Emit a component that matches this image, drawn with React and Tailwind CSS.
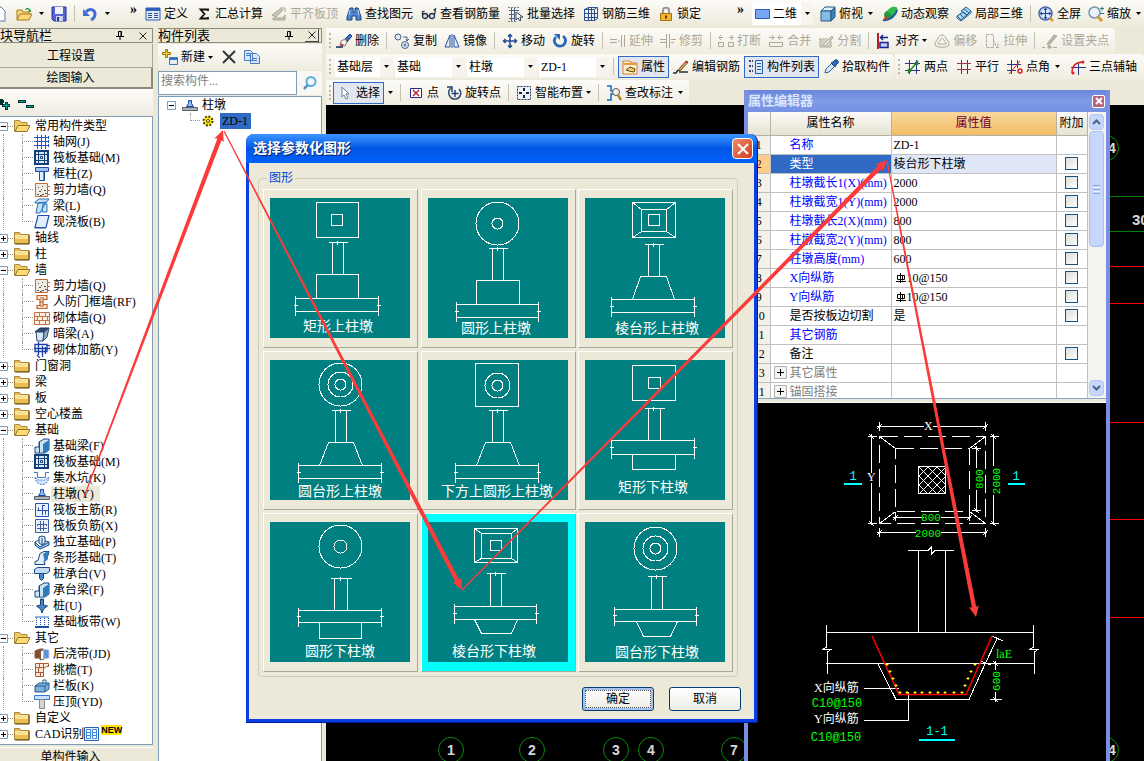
import clsx from 'clsx';

const ICONS = {
  newDoc: <path d="M2 1h9l4 4v10H2z" fill="#fff" stroke="#5b7ab0" />,
  open: (
    <>
      <path d="M9 4c1-3 4-3 5 0l1-1v3h-3l1-1c-1-2-2-2-3-1z" fill="#2a9a3a" />
      <path d="M1 14V4h5l1 2h6v3" fill="#f7d774" stroke="#a8791a" />
      <path d="M1 14l3-6h12l-3 6z" fill="#fdd97a" stroke="#a8791a" />
    </>
  ),
  save: (
    <>
      <path d="M1 1h14v14H3l-2-2z" fill="#5a62d8" stroke="#22309a" />
      <path d="M4 1h8v7H4z" fill="#eef1ff" />
      <path d="M5 10h7v5H5z" fill="#cfd4e8" />
      <path d="M6 11h2v4H6z" fill="#22309a" />
    </>
  ),
  undo: (
    <>
      <path d="M4 6c3-4 9-3 9 2 0 3-2 5-4 6" fill="none" stroke="#3f6fd6" strokeWidth="3" />
      <path d="M1 3v7h7z" fill="#3f6fd6" />
    </>
  ),
  define: (
    <>
      <path d="M1 2h14v12H1z" fill="#dfe9fb" stroke="#2d5fb8" />
      <path d="M1 2h14v3H1z" fill="#2d5fb8" />
      <path d="M3 7.500h4M3 9.500h4M3 11.500h4M9 7.500h4M9 9.500h4M9 11.500h4" stroke="#33507f" />
    </>
  ),
  sigma: <path d="M12 5V3.500H4.500l4 4.500-4 4.500H12V11" fill="none" stroke="#111" strokeWidth="1.800" />,
  slabTop: (
    <>
      <path d="M1 9l8-6 3 1-7 7zM2 12h10l2-3v5H2z" fill="#c9c6b8" stroke="#a8a595" />
      <path d="M9 2h5v4" fill="none" stroke="#a8a595" />
    </>
  ),
  find: (
    <>
      <path d="M4 2h3v4h2V2h3l3 9v3h-5v-4H6v4H1v-3z" fill="#4b86cf" stroke="#1c4687" />
      <path d="M4 4l-1 5M12 4l1 5" stroke="#bcd8f6" />
    </>
  ),
  glasses: (
    <g fill="#d9e4ef" stroke="#26323f" strokeWidth="1.300">
      <circle cx="4" cy="10" r="2.500" />
      <circle cx="11" cy="10" r="2.500" />
      <path d="M1.500 9V6l2-1M6.500 10h2M13.500 9l1-6-2 1" fill="none" />
    </g>
  ),
  batch: (
    <>
      <path d="M3.500 1v14M1 4.500h10M1 8.500h6M1 12.500h6M6.500 1v14" stroke="#4c6487" fill="none" />
      <path d="M0 1.500h12M0 15.500h8" stroke="#6d7f9b" strokeDasharray="2 1" />
      <path d="M8 6v8l2-2 2 3 1-1-1-3h3z" fill="#fff" stroke="#345" />
    </>
  ),
  rebar3d: (
    <path d="M1.500 3.500l4-2h9v11l-3 2h-10zM5.500 1v13M11.500 4v11M1 7.500h14M1 11.500h14M1 3.500h10l3-2M8.500 1v14" fill="none" stroke="#2c4f96" />
  ),
  lock: (
    <>
      <path d="M5 8V4c0-3 6-3 6 0v4" fill="none" stroke="#9a9a9a" strokeWidth="2" />
      <path d="M2.500 7.500h11v7h-11z" fill="#f2b632" stroke="#a8710d" />
      <path d="M8 9.500v3" stroke="#6b4300" strokeWidth="2" />
    </>
  ),
  rect2d: <path d="M.500 3.500h14v9H.500z" fill="#79a6f2" stroke="#2b59b5" />,
  cube: (
    <g stroke="#245a86" strokeLinejoin="round">
      <path d="M1 5l4-4h10l-4 4z" fill="#dff1fb" />
      <path d="M1 5h10v10H1z" fill="#86bce4" />
      <path d="M11 5l4-4v10l-4 4z" fill="#3f82b8" />
    </g>
  ),
  orbit: (
    <>
      <ellipse cx="7" cy="9" rx="5" ry="4.500" fill="#1f9a3d" />
      <path d="M5 6c1-4 6-6 9-5s1 7-2 9" fill="#2eb84e" />
      <path d="M1 14c5 1 12-3 14-10" fill="none" stroke="#1f57a8" strokeWidth="2" />
      <path d="M1 14l3-5 2 4z" fill="#c23b22" />
    </>
  ),
  local3d: (
    <g stroke="#1f6196" fill="#a9d4ef">
      <path d="M1 10l6-4 4 3-6 5zM5 5l5-4 5 4-4 4z" />
      <path d="M4 8l4 4M8 3l5 4M1 10v2l4 3 10-8V5" fill="none" />
    </g>
  ),
  fullscreen: (
    <>
      <circle cx="7.500" cy="7.500" r="6.500" fill="#d3e4fb" stroke="#4a6ba6" strokeWidth="1.500" />
      <path d="M7.500 2.500v10M2.500 7.500h10M6 4l1.500-2L9 4M6 11l1.500 2L9 11M4 6L2 7.500 4 9M11 6l2 1.500L11 9" stroke="#1f3f9a" fill="none" />
      <path d="M12 12l3 3" stroke="#d89a2b" strokeWidth="2.500" />
    </>
  ),
  zoom: (
    <>
      <circle cx="6.500" cy="6.500" r="5.500" fill="#eaf3fb" stroke="#7d93a8" strokeWidth="1.500" />
      <path d="M10 11l4 4" stroke="#d89a2b" strokeWidth="3" />
      <path d="M12 2.500h4M14 .500v4M12 7.500h4" stroke="#2b7f87" />
    </>
  ),
  erase: (
    <>
      <path d="M9 6l5-5 2 2-5 6z" fill="#3d71bd" stroke="#1f3f7a" />
      <path d="M5 8l4-2 2 3-2 4-5-1z" fill="#f3f0ec" stroke="#8c7a73" />
      <path d="M5 10l3 2-2 2-2-1z" fill="#cf3a54" />
      <path d="M0 14h7" stroke="#49587a" strokeWidth="2" />
    </>
  ),
  copyObj: (
    <g fill="#dbe9f8" stroke="#4a6480">
      <circle cx="4" cy="4" r="3" />
      <circle cx="11" cy="12" r="3.500" />
      <path d="M9 4h4v4M12 6l1 2 2-2" fill="none" />
      <circle cx="11" cy="12" r="1" />
    </g>
  ),
  mirror: (
    <>
      <path d="M6 2v12H1zM10 2v12h5z" fill="#e5eefb" stroke="#2555a5" />
      <path d="M8 1v14" stroke="#2555a5" />
    </>
  ),
  move: (
    <path d="M8 1.500v13M1.500 8h13M6 3.500l2-2 2 2M6 12.500l2 2 2-2M3.500 6l-2 2 2 2M12.500 6l2 2-2 2" fill="none" stroke="#1f4c93" strokeWidth="1.500" />
  ),
  rotate: (
    <>
      <path d="M4 4c-4 4 0 10 5 9 5-1 6-7 2-10" fill="none" stroke="#2c66ba" strokeWidth="2.800" />
      <path d="M2 1h6v6z" fill="#2c66ba" />
    </>
  ),
  extend: <path d="M0 6.500h7M0 9.500h7M8 8h2M11.500 2v12M14.500 2v12" fill="none" stroke="#aca899" />,
  trim: <path d="M0 6.500h6M0 9.500h6M6.500 1v14M9.500 1v14M11 6.500h5M11 9.500h3" fill="none" stroke="#aca899" />,
  breakIt: <path d="M1 4.500h4M11 4.500h4M3 2L1 4.500 3 7M13 2l2 2.500L13 7M.500 9.500h5v4h-5zM10.500 9.500h5v4h-5z" fill="none" stroke="#aca899" />,
  merge: <path d="M1 4.500h5M10 4.500h5M4 2l2 2.500L4 7M12 2l-2 2.500L12 7M1.500 9.500h13v4h-13z" fill="none" stroke="#aca899" />,
  split: <path d="M1 6h9M2 6v8h11V8M5 12l9-9 1 2-8 8z" fill="#d3d0c3" stroke="#aca899" />,
  align: (
    <>
      <path d="M2 0v16" stroke="#b3202c" strokeWidth="2" />
      <path d="M4.500 4.500H12M7 2L4.500 4.500 7 7" fill="none" stroke="#14248a" strokeWidth="1.500" />
      <path d="M4 9.500h8v5H4z" fill="#c3cff2" stroke="#14248a" strokeWidth="1.500" />
    </>
  ),
  offset: (
    <g fill="none" stroke="#aca899">
      <path d="M1 12c0-4 2-4 3-7 2-4 6-4 8 0 1 3 3 3 3 7-2 3-12 3-14 0z" />
      <path d="M4 11c0-3 2-2 2-4 1-2 3-2 4 0 0 2 2 1 2 4z" />
    </g>
  ),
  stretch: (
    <path d="M2.500 1.500h7v13h-7zM9 6l4 8.500h1v-4M12 14.500h3" fill="none" stroke="#aca899" strokeDasharray="3 1" />
  ),
  grip: <path d="M0 14.500h3M11 14.500h4M5 11l7-9 3 1-8 9zM6 13h3v2H6z" fill="#b9b6a7" stroke="#aca899" />,
  props: (
    <>
      <path d="M1 2h7l1 2h6v11H1z" fill="#fdeed0" stroke="#d5832a" />
      <path d="M1 4h14v2H1z" fill="#e79b42" />
      <path d="M4 11l4-3 5 2-1 3-5-1z" fill="#f3cb67" stroke="#5c4a1a" />
    </>
  ),
  editRebar: (
    <>
      <path d="M6 10l7-8 2 1-7 8-3 1z" fill="#d8ae6b" stroke="#6f4a1a" />
      <path d="M0 14h3l2-3M6 13h9" fill="none" stroke="#27303b" strokeWidth="1.500" />
      <path d="M12 3l2-1 1 1-1 2z" fill="#c23b3b" />
    </>
  ),
  list: (
    <>
      <path d="M7.500 1.500h7v13h-7z" fill="#d7e6fa" stroke="#2a5aa0" />
      <path d="M9 4.500h4M9 7.500h4M9 10.500h4" stroke="#2a5aa0" />
      <path d="M1 2h2M1 7h2M1 12h2M4 2h1M4 7h1M4 12h1" stroke="#3a4b62" strokeWidth="2" />
    </>
  ),
  picker: (
    <>
      <path d="M2 14l1-4 6-6 3 3-6 6z" fill="#d7eafa" stroke="#2a5f9e" />
      <path d="M8 4l2-1 2-2c2-1 4 1 3 3l-2 2-1 2z" fill="#2a6cc0" stroke="#173f7a" />
    </>
  ),
  twoPt: (
    <>
      <path d="M0 4.500h15M0 11.500h15M4.500 1v14M11.500 1v14" stroke="#273a8c" />
      <path d="M3 14L13 2" stroke="#2b8a2b" strokeWidth="1.500" />
      <circle cx="4.500" cy="11.500" r="2" fill="#2b7a2b" />
      <circle cx="11.500" cy="4.500" r="2" fill="#2b7a2b" />
    </>
  ),
  parallel: (
    <>
      <path d="M5.500 1v14M11.500 1v14" stroke="#273a8c" />
      <path d="M1 4.500h14M1 10.500h14" stroke="#9a3a4c" />
    </>
  ),
  ptAngle: (
    <>
      <path d="M0 5.500h14M0 11.500h9M4.500 1v14M10.500 1v8" stroke="#273a8c" />
      <path d="M2 15L13 2" stroke="#d22" />
      <circle cx="13" cy="12" r="2" fill="none" stroke="#d22" strokeWidth="1.500" />
    </>
  ),
  threePt: (
    <>
      <path d="M1 8.500h15M8.500 3v13" stroke="#273a8c" />
      <path d="M2 14C2 7 6 3 13 3" fill="none" stroke="#d22" strokeWidth="1.500" />
      <circle cx="3" cy="14" r="1.500" fill="#d22" />
      <circle cx="13" cy="3" r="1.500" fill="#d22" />
    </>
  ),
  cursor: <path d="M5 2v10l2-2 2 4 2-1-2-4h3z" fill="#fff" stroke="#6d7f95" />,
  point: (
    <>
      <path d="M2.500 3.500h11v9h-11z" fill="#fff" stroke="#222b85" />
      <path d="M5 5l6 6M11 5l-6 6" stroke="#c22a3c" strokeWidth="1.500" />
    </>
  ),
  rotPoint: (
    <>
      <path d="M5 3c-5 4-1 12 5 11 5-1 6-7 3-10" fill="none" stroke="#344a66" strokeWidth="1.500" />
      <path d="M9 5v7M5.500 8.500h7M1 2h5v5" fill="none" stroke="#1f3f7a" strokeWidth="1.500" />
    </>
  ),
  smart: (
    <>
      <path d="M1.500 1.500h13v13h-13z" fill="#eaf1fb" stroke="#2a3b55" strokeDasharray="2 1" />
      <path d="M8 3v3M8 10v3M3 8h3M10 8h3" stroke="#18253a" strokeWidth="2" />
    </>
  ),
  dimEdit: (
    <>
      <path d="M1 1h4v5h2M1 15h4V9h2" fill="none" stroke="#1668c2" strokeWidth="1.500" />
      <circle cx="10" cy="7" r="3.500" fill="#f0f0e6" stroke="#555" />
      <path d="M12 10l3 5" stroke="#b78326" strokeWidth="2.500" />
    </>
  ),
  create: (
    <>
      <path d="M3.500 .500h2v3h3v2h-3v3h-2v-3h-3v-2h3z" fill="#f2d33b" stroke="#97770c" />
      <path d="M7.500 8.500h8v7h-8z" fill="#e5effc" stroke="#3d74be" />
      <path d="M8 10h7" stroke="#3d74be" strokeWidth="2" />
    </>
  ),
  del: <path d="M2 2l12 12M14 2L2 14" stroke="#33373d" strokeWidth="2" />,
  copyDoc: (
    <g fill="#d5e6fa" stroke="#4a7cc0">
      <path d="M.500 1.500h6l2 2v8h-8zM6.500 4.500h6l3 3v7h-9z" />
      <path d="M2 4.500h4M2 6.500h4M8 9.500h5M8 11.500h5" />
    </g>
  ),
  search: (
    <>
      <circle cx="9" cy="6.500" r="4.500" fill="#eef8ff" stroke="#5aaede" strokeWidth="2" />
      <path d="M5.500 10L2 14" stroke="#4a8ec2" strokeWidth="2.500" />
    </>
  ),
  folder: (
    <>
      <path d="M.500 13.500v-11h5l1.500 2h8v9z" fill="#e9bd50" stroke="#b08a38" />
      <path d="M1 5h13v4H1z" fill="#f9e092" />
      <path d="M15 5v9H1" fill="none" stroke="#5b4518" />
    </>
  ),
  folderOpen: (
    <>
      <path d="M.500 13.500v-11h5l1.500 2h6v3" fill="#f0cb62" stroke="#b08a38" />
      <path d="M1 13.500l3-6h12l-3 6z" fill="#fbdc78" stroke="#9a7420" />
    </>
  ),
  axis: (
    <path d="M3.500 1v14M7.500 1v14M11.500 1v14M0 3.500h15M0 7.500h15M0 11.500h15M14.500 2v3M14.500 6v3M14.500 10v3" stroke="#2a55b8" fill="none" />
  ),
  raft: (
    <>
      <path d="M1 1h13v13H1z" fill="#dce9f8" stroke="#123f77" strokeWidth="2" />
      <path d="M4.500 2v12M10.500 2v12M2 4.500h12M2 10.500h12" stroke="#123f77" />
      <path d="M6.500 6.500h2v2h-2z" fill="#fff" stroke="#123f77" />
    </>
  ),
  column: (
    <>
      <path d="M1.500 1.500h13v4h-13z" fill="#9dc3f1" stroke="#1c4fa5" />
      <path d="M5.500 5.500h5v9h-5z" fill="#e5effc" stroke="#1c4fa5" />
      <path d="M9 6h1v8H9z" fill="#4f84cf" />
    </>
  ),
  wall: (
    <>
      <path d="M1.500 1.500h12v13h-12z" fill="#efebe2" stroke="#c56b38" />
      <path d="M4 5.500h1M8 4.500h1M10 8.500h2M5 9.500h2M3 12.500h2M8 12.500h2M11 11.500h2M7 7.500h1M6 13.500h2" stroke="#555" />
      <path d="M14 4.500h2M14 8.500h2M14 12.500h2" stroke="#c56b38" />
    </>
  ),
  beam: (
    <path d="M1 4l4-3h10l-3 4H1zM4 5l8-1-6 11H2zM9 6h4v8H8z" fill="#c4e0f5" stroke="#2b73b8" />
  ),
  slab: <path d="M4 1.500h11l-3 12H1zM1 14h11" fill="#e3effc" stroke="#2250a8" strokeWidth="1.200" />,
  defence: <path d="M3 1.500h10v4H9v5h4v4H3v-3h3v-6H3zM6 4h4M6 8h3M6 12h4" fill="#fbe3cf" stroke="#b8622c" strokeWidth="1.200" />,
  brick: (
    <path d="M.500 2.500h15v12H.500zM0 6.500h16M0 10.500h16M5.500 3v3M11.500 3v3M3.500 7v3M8.500 7v3M13.500 7v3M5.500 11v3M11.500 11v3" fill="#fdeee2" stroke="#c5714a" />
  ),
  hidden: (
    <>
      <path d="M1 6l5-4h9l-4 4z" fill="#2c4a74" stroke="#1d3254" />
      <path d="M2 6h8l-1 9H3z" fill="#dde7f3" stroke="#2c4a74" />
      <path d="M10 6l5-4-2 9-4 4z" fill="#8fa9c8" stroke="#2c4a74" />
    </>
  ),
  brickBar: <path d="M1 2.500h12v7H1zM4.500 0v13M8.500 4v11M0 6.500h16M11.500 5v7M3 13l3 3M13 3l3 1" fill="none" stroke="#1a3fa8" strokeWidth="1.300" />,
  footBeam: (
    <>
      <path d="M1 15V9h4V4l5-3h5v11l-4 3z" fill="#cfe3f7" stroke="#174a86" />
      <path d="M9 15V6l6-4v10l-4 3z" fill="#2f7cbb" />
      <path d="M5.500 4v11" stroke="#174a86" />
    </>
  ),
  pit: (
    <>
      <path d="M0 2.500h3.500v5h8v-5H15" fill="none" stroke="#3f79cc" />
      <path d="M1 7c1 10 13 10 14 0l-4 3H4z" fill="#d6e6fb" stroke="#3f79cc" strokeDasharray="2 1" />
    </>
  ),
  pier: (
    <>
      <path d="M.500 10.500h15v3H.500z" fill="#aeb4bb" stroke="#5a6068" />
      <path d="M6.500 3.500h3v3l2 3h-7l2-3z" fill="#8fbcf0" stroke="#1b4ca4" />
    </>
  ),
  mainBar: <path d="M1.500 1.500h13v13h-13zM3 8.500h11M8.500 3.500H11M8.500 3v10M4.500 5.500v3M11.500 8.500v4" fill="#eaf1fd" stroke="#2753b5" />,
  negBar: <path d="M1.500 1.500h13v13h-13zM3 6.500h10M3 10.500h10M6.500 3v10M9.500 3v10M3.500 6v2M12.500 6v2" fill="#eaf1fd" stroke="#3a5f9a" />,
  isolated: (
    <>
      <path d="M1 8l5 5 9-5v3l-9 4-5-4z" fill="#9ec5ea" stroke="#174a86" />
      <path d="M5 3l3-1 3 1v6l-3 2-3-2zM8 4v7M1 8l4-2M11 7l4 1" fill="#d8eafb" stroke="#174a86" />
    </>
  ),
  strip: (
    <>
      <path d="M1 14.500v-3l3-1 2-7 4-2h5l-1 4-4 6 1 3z" fill="#e2eefa" stroke="#174a86" />
      <path d="M9 4l5-3v8l-3 3z" fill="#2f7cbb" />
    </>
  ),
  cap: (
    <>
      <path d="M.500 3.500l3-2h12v4l-3 2H.500z" fill="#c4dcf5" stroke="#174a86" />
      <path d="M5.500 7.500h4v5l-2 2-2-2z" fill="#4a8bd0" stroke="#174a86" />
    </>
  ),
  pile: <path d="M6.500 1h3v6l4 1-4 3-1.500 4-1.500-4-4-3 4-1z" fill="#4a86c4" stroke="#1a4375" />,
  band: (
    <>
      <path d="M1 3h14" stroke="#8fb4ea" strokeWidth="2" />
      <path d="M1 13h14" stroke="#1b4ca4" strokeWidth="2" />
      <path d="M2.500 4v8M6.500 4v8M10.500 4v8M14.500 4v8" stroke="#1b4ca4" strokeDasharray="1 1" />
    </>
  ),
  postCast: (
    <>
      <path d="M1 5l5-2v9H1zM6 3h4v10l-4 1z" fill="#8a4a2a" stroke="#7a5a48" />
      <path d="M9 3l6 1v8l-5 1z" fill="#5f8fd2" stroke="#c2cce0" />
      <path d="M7 5h2v8H7z" fill="#fff" />
    </>
  ),
  eaves: <path d="M1.500 1.500h8v13h-8zM2 5.500h8M2 10.500h8M5.500 2v4M4.500 6v4M6.500 10v5M9.500 1.500h5v3h-2l-3 2" fill="#fbe7d8" stroke="#a85a3a" />,
  rail: (
    <>
      <path d="M1 8l4-3h10v6l-4 3H1z" fill="#7db0dc" stroke="#235c8e" />
      <path d="M1 8h10l4-3M11 8v6M9 5V2h3v3" fill="none" stroke="#235c8e" />
    </>
  ),
  coping: (
    <>
      <path d="M.500 1.500h15v4H.500z" fill="#c6dffa" stroke="#2f7bd0" />
      <path d="M5.500 5.500h5v9h-5z" fill="#d5d5d5" stroke="#888" />
    </>
  ),
  gear: (
    <>
      <circle cx="8" cy="8" r="4.500" fill="#ffea00" stroke="#4a4300" strokeWidth="2" strokeDasharray="2 1.500" />
      <circle cx="8" cy="8" r="3" fill="#ffea00" />
      <circle cx="8" cy="8" r="1.500" fill="#fff" stroke="#4a4300" />
    </>
  ),
  cad: (
    <>
      <path d="M.500 1.500h14v13H.500z" fill="#e6f1fd" stroke="#2b63ae" />
      <path d="M2.500 3.500h4v9h-4zM8.500 3.500h4v9h-4zM3 6.500h4M3 9.500h4M9 6.500h4M9 9.500h4" fill="#fff" stroke="#3d86d8" />
    </>
  ),
};

function Icon({ name }) {
  return <svg viewBox="0 0 16 16" className="w-4 h-4 shrink-0" aria-hidden="true">{ICONS[name]}</svg>;
}

function Caret() {
  return <svg viewBox="0 0 5 3" className="w-[5px] h-[3px] shrink-0" aria-hidden="true"><path d="M0 0h5L2.500 3z" /></svg>;
}

function Sep() {
  return <span className="w-px h-[17px] bg-[#c5c2b2] shrink-0" />;
}

function Grip() {
  return <span className="w-0 h-[15px] border-l-2 border-dotted border-[#bdb9a6] shrink-0" />;
}

function Tool({ icon, label, disabled, active, caret, split }) {
  return (
    <button
      disabled={disabled}
      className={clsx(
        'flex items-center gap-[3px] shrink-0 h-[22px] whitespace-nowrap',
        disabled && 'text-[#aca899]',
        active && 'border border-[#316ac5] bg-[#e1e6f0] px-[3px]'
      )}
    >
      <Icon name={icon} />
      <span>{label}</span>
      {caret && <Caret />}
      {split && <span className="px-[2px]"><Caret /></span>}
    </button>
  );
}

function Strip({ className, children }) {
  return (
    <div className={clsx('flex items-center shrink-0 pl-[3px] rounded-r-sm bg-linear-to-b from-[#fcfbf8] to-[#f0ede1]', className)}>
      {children}
    </div>
  );
}

function Picker({ label, value, className }) {
  return (
    <div className={clsx('flex items-center shrink-0 h-5 bg-white relative', className)}>
      <select aria-label={label} className="appearance-none w-full h-5 bg-transparent pl-[2px] outline-none">
        <option>{value}</option>
      </select>
      <span className="absolute right-0 top-0 h-5 w-[13px] bg-[#f6f4ec] flex items-center justify-center pointer-events-none">
        <Caret />
      </span>
    </div>
  );
}

function TopBar() {
  return (
    <div className="flex h-7 shrink-0 bg-linear-to-b from-[#fcfbf8] to-[#ece9d8]">
      <div className="flex items-center gap-[7px] w-[141px] shrink-0 h-[27px]">
        <button aria-label="新建" className="-ml-[10px] mr-[3px]"><Icon name="newDoc" /></button>
        <button aria-label="打开"><Icon name="open" /></button>
        <Caret />
        <button aria-label="保存"><Icon name="save" /></button>
        <Sep />
        <button aria-label="撤销"><Icon name="undo" /></button>
        <Caret />
        <span className="ml-auto mr-1 mb-2 font-bold text-sm">»</span>
      </div>
      <div className="flex items-center gap-2 w-[607px] shrink-0 pl-1 h-[27px]">
        <Tool icon="define" label="定义" />
        <Tool icon="sigma" label="汇总计算" />
        <Tool icon="slabTop" label="平齐板顶" disabled />
        <Tool icon="find" label="查找图元" />
        <Tool icon="glasses" label="查看钢筋量" />
        <Tool icon="batch" label="批量选择" />
        <Tool icon="rebar3d" label="钢筋三维" />
        <Tool icon="lock" label="锁定" />
        <span className="ml-auto mr-1 mb-2 font-bold text-sm">»</span>
      </div>
      <div className="flex items-center gap-[7px] pl-1 h-[27px]">
        <div className="relative flex items-center w-[61px] h-[22px] bg-white pl-[3px] shrink-0">
          <Icon name="rect2d" />
          <select aria-label="视图" className="appearance-none bg-transparent outline-none pl-[2px] w-10">
            <option>二维</option>
          </select>
          <span className="absolute right-0 top-0 w-3 h-[22px] bg-[#f6f4ec] flex items-center justify-center pointer-events-none">
            <Caret />
          </span>
        </div>
        <Tool icon="cube" label="俯视" split />
        <Tool icon="orbit" label="动态观察" />
        <Tool icon="local3d" label="局部三维" />
        <Sep />
        <Tool icon="fullscreen" label="全屏" />
        <Tool icon="zoom" label="缩放" split />
      </div>
    </div>
  );
}

function MainToolbars() {
  return (
    <div className="flex flex-col gap-px shrink-0">
      <div className="flex h-[25px]">
        <Strip className="gap-[5px] pr-[6px]">
          <Grip />
          <div className="flex items-center gap-[7px]">
            <Tool icon="erase" label="删除" />
            <Sep />
            <Tool icon="copyObj" label="复制" />
            <Tool icon="mirror" label="镜像" />
            <Sep />
            <Tool icon="move" label="移动" />
            <Tool icon="rotate" label="旋转" />
            <Sep />
            <Tool icon="extend" label="延伸" disabled />
            <Tool icon="trim" label="修剪" disabled />
            <Sep />
            <Tool icon="breakIt" label="打断" disabled />
            <Tool icon="merge" label="合并" disabled />
            <Tool icon="split" label="分割" disabled />
            <Sep />
            <Tool icon="align" label="对齐" caret />
            <Tool icon="offset" label="偏移" disabled />
            <Tool icon="stretch" label="拉伸" disabled />
            <Sep />
            <Tool icon="grip" label="设置夹点" disabled />
          </div>
        </Strip>
      </div>
      <div className="flex h-[25px]">
        <Strip className="gap-1 pr-1">
          <Grip />
          <div className="flex items-center gap-[2px]">
            <Picker label="楼层" value="基础层" className="w-[58px]" />
            <Picker label="构件大类" value="基础" className="w-[70px]" />
            <Picker label="构件类型" value="柱墩" className="w-[70px]" />
            <Picker label="构件" value="ZD-1" className="w-[70px]" />
          </div>
          <Sep />
          <Tool icon="props" label="属性" active />
          <Tool icon="editRebar" label="编辑钢筋" />
          <Tool icon="list" label="构件列表" active />
          <Tool icon="picker" label="拾取构件" />
        </Strip>
        <Strip className="gap-[5px] ml-px grow">
          <Grip />
          <div className="flex items-center gap-2">
            <Tool icon="twoPt" label="两点" />
            <Tool icon="parallel" label="平行" />
            <Tool icon="ptAngle" label="点角" split />
            <Tool icon="threePt" label="三点辅轴" />
          </div>
        </Strip>
      </div>
      <div className="flex h-[25px]">
        <Strip className="gap-[2px] pr-1">
          <Grip />
          <div className="flex items-center gap-[7px]">
            <div className="flex items-center gap-1">
              <Tool icon="cursor" label="选择" active />
              <Caret />
            </div>
            <Sep />
            <Tool icon="point" label="点" />
            <Tool icon="rotPoint" label="旋转点" />
            <Sep />
            <Tool icon="smart" label="智能布置" caret />
            <Sep />
            <Tool icon="dimEdit" label="查改标注" split />
          </div>
        </Strip>
      </div>
    </div>
  );
}

const TREE = [
  { label: '常用构件类型', items: [['axis', '轴网(J)'], ['raft', '筏板基础(M)'], ['column', '框柱(Z)'], ['wall', '剪力墙(Q)'], ['beam', '梁(L)'], ['slab', '现浇板(B)']] },
  { label: '轴线' },
  { label: '柱' },
  { label: '墙', items: [['wall', '剪力墙(Q)'], ['defence', '人防门框墙(RF)'], ['brick', '砌体墙(Q)'], ['hidden', '暗梁(A)'], ['brickBar', '砌体加筋(Y)']] },
  { label: '门窗洞' },
  { label: '梁' },
  { label: '板' },
  { label: '空心楼盖' },
  {
    label: '基础',
    items: [
      ['footBeam', '基础梁(F)'], ['raft', '筏板基础(M)'], ['pit', '集水坑(K)'], ['pier', '柱墩(Y)'],
      ['mainBar', '筏板主筋(R)'], ['negBar', '筏板负筋(X)'], ['isolated', '独立基础(P)'], ['strip', '条形基础(T)'],
      ['cap', '桩承台(V)'], ['footBeam', '承台梁(F)'], ['pile', '桩(U)'], ['band', '基础板带(W)'],
    ],
  },
  { label: '其它', items: [['postCast', '后浇带(JD)'], ['eaves', '挑檐(T)'], ['rail', '栏板(K)'], ['coping', '压顶(YD)']] },
  { label: '自定义' },
  { label: 'CAD识别', isNew: true },
];

function Expander({ open }) {
  return (
    <svg viewBox="0 0 9 9" className="w-[9px] h-[9px] shrink-0" aria-hidden="true">
      <path d="M.500 .500h8v8h-8z" fill="#fff" stroke="#7b9ebd" />
      <path d={open ? 'M2 4.500h5' : 'M2 4.500h5M4.500 2v5'} stroke="#000" />
    </svg>
  );
}

function PanelHeader({ title, boxed }) {
  return (
    <div className="flex items-center h-[15px] border-y border-r border-[#8d8a7c] shrink-0 pr-[2px]">
      <h2 className="text-[13px] leading-[13px]">{title}</h2>
      <svg viewBox="0 0 8 9" className="w-2 h-[9px] ml-auto mr-3" aria-hidden="true">
        <path d="M2.500 .500h3v5h-3zM0 5.500h8M4 6v3M5 1v4" fill="none" stroke="#000" />
      </svg>
      <button aria-label="关闭" className={clsx('w-[14px] h-[13px] flex items-center justify-center', boxed && 'border-r border-b border-[#444]')}>
        <svg viewBox="0 0 8 8" className="w-2 h-2"><path d="M.500 .500l7 7M7.500 .500l-7 7" stroke="#222" /></svg>
      </button>
    </div>
  );
}

function NavPanel() {
  return (
    <nav className="w-[153px] shrink-0 flex flex-col overflow-hidden">
      <PanelHeader title="块导航栏" />
      <button className="h-[24px] mt-px shrink-0 border-b border-r border-[#aca899] pr-[10px]">工程设置</button>
      <button className="h-[21px] shrink-0 border-b-2 border-r-2 border-[#8d8a7c] pr-[10px]">绘图输入</button>
      <div className="h-[27px] shrink-0 bg-linear-to-b from-[#fdfcf9] to-[#efece0] pt-[9px]">
        <svg viewBox="0 0 36 14" className="w-9 h-[14px]" aria-hidden="true">
          <path d="M0 3.500h4M1.500 1v6M2 7.500h8M6.500 4v8M18 3.500h8M26 8.500h8" stroke="#00302c" strokeWidth="3" />
          <path d="M3 7.500h6M6.500 5v6M19 3.500h6M27 8.500h6" stroke="#00b0a0" />
        </svg>
      </div>
      <ul className="grow border-y border-r border-[#7f9db9] bg-white pt-px overflow-hidden">
        {TREE.map(group => (
          <li key={group.label}>
            <div className="flex items-center h-4 -ml-px whitespace-nowrap">
              <Expander open={!!group.items} />
              <span className="w-[5px] border-t border-dotted border-[#9a9a8c]" />
              <span className="ml-px"><Icon name={group.items ? 'folderOpen' : 'folder'} /></span>
              <span className="ml-[5px]">{group.label}</span>
              {group.isNew && (
                <>
                  <Icon name="cad" />
                  <span className="ml-px mb-2 text-[9px] leading-[10px] font-bold font-['Liberation_Sans'] bg-[#ffe600]">NEW</span>
                </>
              )}
            </div>
            {group.items && (
              <ul>
                {group.items.map(([icon, label], i) => (
                  <li key={label} className="flex items-center h-4 whitespace-nowrap">
                    <span className="ml-[3px] w-[19px] h-4 border-l border-dotted border-[#9a9a8c] shrink-0" />
                    <span className="w-[11px] shrink-0">
                      <span className="block h-2 border-l border-b border-dotted border-[#9a9a8c]" />
                      <span className={clsx('block h-2', i < group.items.length - 1 && 'border-l border-dotted border-[#9a9a8c]')} />
                    </span>
                    <span className="ml-px"><Icon name={icon} /></span>
                    <span className={clsx('ml-px px-[2px] leading-4', label === '柱墩(Y)' && 'bg-[#ece9d8] pr-[6px]')}>{label}</span>
                  </li>
                ))}
              </ul>
            )}
          </li>
        ))}
      </ul>
      <button className="h-[14px] mt-[2px] shrink-0 border-t border-white pr-3 leading-[18px] overflow-hidden">单构件输入</button>
    </nav>
  );
}

function ComponentList() {
  return (
    <section className="w-[164px] ml-[5px] mr-1 shrink-0 flex flex-col">
      <PanelHeader title="构件列表" boxed />
      <div className="flex items-center h-[26px] mt-px gap-2 pl-1 shrink-0 bg-linear-to-b from-[#fcfbf8] to-[#efece0]">
        <Tool icon="create" label="新建" caret />
        <div className="flex gap-[7px]">
          <button aria-label="删除"><Icon name="del" /></button>
          <button aria-label="复制"><Icon name="copyDoc" /></button>
        </div>
      </div>
      <div className="flex items-center h-[26px] shrink-0">
        <input
          type="text"
          aria-label="搜索构件"
          placeholder="搜索构件..."
          className="w-[139px] h-6 border border-[#7f9db9] bg-white px-[2px] pb-1 outline-none placeholder:text-[#808080]"
        />
        <button aria-label="搜索" className="grow h-6 flex items-center justify-center bg-[#f8f7f2]"><Icon name="search" /></button>
      </div>
      <ul className="grow border border-b-0 border-[#7f9db9] bg-white">
        <li>
          <div className="flex items-center h-4 pl-2">
            <Expander open />
            <span className="ml-[6px]"><Icon name="pier" /></span>
            <span className="ml-1">柱墩</span>
          </div>
          <ul>
            <li className="flex h-4 pl-[31px] items-start">
              <span className="w-[10px] h-2 border-l border-b border-dotted border-[#9a9a8c]" />
              <span><Icon name="gear" /></span>
              <span className="ml-[4px] px-[2px] w-[31px] leading-4 bg-[#316ac5]">ZD-1</span>
            </li>
          </ul>
        </li>
      </ul>
    </section>
  );
}

const AXIS_MARKS = [
  [451, 750, '1'], [532, 750, '2'], [616, 750, '3'], [651, 750, '4'], [734, 750, '7'], [1106, 148, '4'], [1106, 750, '4'],
];
const AXIS_LINES = [[196, '#008000'], [231, '#008000'], [266, '#f00'], [303, '#f00'], [422, '#f00'], [519, '#f00'], [617, '#f00']];

function ModelCanvas() {
  return (
    <div className="grow bg-black overflow-hidden">
      <svg viewBox="326 105 818 656" className="w-[818px] h-[656px] font-['Liberation_Sans']" aria-label="绘图区">
        {AXIS_LINES.map(([y, color]) => <path key={y} d={`M1100 ${y}.5h44`} stroke={color} />)}
        {AXIS_MARKS.map(([x, y, n]) => (
          <g key={`${x}-${y}`}>
            <circle cx={x} cy={y} r="12.500" fill="none" stroke="#0a8a0a" />
            <text x={n === '4' && x > 1000 ? x + 6 : x} y={y + 5} textAnchor="middle" fontSize="14" fontWeight="bold" fill="#d8d8d8">{n}</text>
          </g>
        ))}
        <text x="1132" y="225" fontSize="15" fontWeight="bold" fill="#d8d8d8">30</text>
      </svg>
    </div>
  );
}

const PROPS = [
  { no: 1, name: '名称', value: 'ZD-1', tone: 'blue' },
  { no: 2, name: '类型', value: '棱台形下柱墩', tone: 'blue', check: true, selected: true },
  { no: 3, name: '柱墩截长1(X)(mm)', value: '2000', tone: 'blue', check: true },
  { no: 4, name: '柱墩截宽1(Y)(mm)', value: '2000', tone: 'blue', check: true },
  { no: 5, name: '柱墩截长2(X)(mm)', value: '800', tone: 'blue', check: true },
  { no: 6, name: '柱墩截宽2(Y)(mm)', value: '800', tone: 'blue', check: true },
  { no: 7, name: '柱墩高度(mm)', value: '600', tone: 'blue', check: true },
  { no: 8, name: 'X向纵筋', value: '10@150', tone: 'blue', check: true, rebar: true },
  { no: 9, name: 'Y向纵筋', value: '10@150', tone: 'blue', check: true, rebar: true },
  { no: 10, name: '是否按板边切割', value: '是', check: true },
  { no: 11, name: '其它钢筋', value: '', tone: 'blue' },
  { no: 12, name: '备注', value: '', check: true },
  { no: 13, name: '其它属性', value: '', tone: 'gray', group: true },
  { no: 21, name: '锚固搭接', value: '', tone: 'gray', group: true },
];

function PropertyTable() {
  return (
    <table className="table-fixed border-collapse w-[339px] bg-white">
      <colgroup>
        <col className="w-[22px]" />
        <col className="w-[121px]" />
        <col className="w-[165px]" />
        <col className="w-[31px]" />
      </colgroup>
      <thead>
        <tr className="h-[23px] bg-linear-to-b from-[#fbfaf6] to-[#e6e3d3]">
          <th className="border-r border-b border-[#b5b2a4]" aria-label="序号" />
          <th className="font-normal border-r border-b border-[#b5b2a4]">属性名称</th>
          <th className="font-normal border-r border-b border-[#b5b2a4] text-[#6b0032] bg-linear-to-b from-[#fbd79c] to-[#f0bd62]">属性值</th>
          <th className="font-normal border-r border-b border-[#b5b2a4] whitespace-nowrap">附加</th>
        </tr>
      </thead>
      <tbody>
        {PROPS.map(row => (
          <tr key={row.no} className="h-[19px] leading-[18px]">
            <td className={clsx('border-r border-b border-[#c0c0c0] text-center', row.selected ? 'bg-[#fbcf87] text-[#6b0032]' : 'bg-[#f3f1e8]')}>{row.no}</td>
            <td
              className={clsx(
                'border-r border-b border-[#c0c0c0] whitespace-nowrap',
                row.selected ? 'bg-[#316ac5] text-white' : row.tone === 'blue' ? 'text-[#0000ff]' : row.tone === 'gray' && 'text-[#808080]'
              )}
            >
              <span className="flex items-center">
                <span className="w-[19px] shrink-0 pl-[3px]">
                  {row.group && (
                    <svg viewBox="0 0 13 13" className="w-[13px] h-[13px]" aria-hidden="true">
                      <path d="M.500 .500h12v12h-12z" fill="#f4f4f4" stroke="#b0b0b0" />
                      <path d="M3 6.500h7M6.500 3v7" stroke="#000" />
                    </svg>
                  )}
                </span>
                {row.name}
              </span>
            </td>
            <td className={clsx('border-r border-b border-[#c0c0c0] pl-[2px]', row.selected && 'bg-[#dfe7f6]')}>
              <span className="flex items-center">
                {row.rebar && (
                  <svg viewBox="0 0 10 12" className="w-[10px] h-3 ml-[2px] mr-px" aria-hidden="true">
                    <path d="M1.500 3.500h7v4h-7zM4.500 1v10M6.500 3.500v5M0 9.500h10" fill="none" stroke="#000" />
                  </svg>
                )}
                {row.value}
              </span>
            </td>
            <td className="border-r border-b border-[#c0c0c0]">
              {row.check && (
                <input
                  type="checkbox"
                  aria-label={`${row.name} 附加`}
                  className="appearance-none block mx-auto w-[13px] h-[13px] border border-[#1c5180] bg-linear-to-br from-[#dcdcd7] to-white"
                />
              )}
            </td>
          </tr>
        ))}
      </tbody>
    </table>
  );
}

function ScrollArrow({ up }) {
  return (
    <button aria-label={up ? '向上' : '向下'} className="w-[15px] h-4 shrink-0 rounded-sm border border-[#b4c8f6] bg-[#c6d6fd] flex items-center justify-center">
      <svg viewBox="0 0 9 6" className="w-[9px] h-[6px]">
        <path d={up ? 'M1 5l3.500-3.500L8 5' : 'M1 1l3.500 3.500L8 1'} fill="none" stroke="#4d6185" strokeWidth="2" />
      </svg>
    </button>
  );
}

const DOTS = [
  [887, 664], [890, 671], [893, 678], [896, 685], [900, 692], [907, 692], [915, 692], [922, 692], [930, 692],
  [938, 692], [945, 692], [954, 692], [962, 692], [965, 685], [968, 678], [971, 671], [975, 664],
];

// Plan view above, section 1-1 below
function PierDrawing() {
  return (
    <svg viewBox="748 403 358 358" className="w-[358px] h-[358px] bg-black shrink-0" fontSize="12" aria-label="柱墩详图">
      <defs>
        <pattern id="hatch" width="9" height="9" patternUnits="userSpaceOnUse" x="919" y="467">
          <path d="M0 0l9 9M9 0l-9 9" stroke="#fff" fill="none" />
        </pattern>
      </defs>
      <g fill="none" stroke="#fff" shapeRendering="crispEdges">
        <path d="M879.500 436.500h106v87h-106z" strokeDasharray="18 6" />
        <path d="M895.500 448.500h74v63h-74z" strokeDasharray="18 6" />
        <path d="M879.500 436.500l16 12M985.500 436.500l-16 12M879.500 523.500l16-12M985.500 523.500l-16-12" />
        <path d="M918.500 466.500h27v27h-27z" fill="url(#hatch)" />
        {/* dimension lines */}
        <path d="M877 426.500h47M933 426.500h54M879.500 422v9M985.500 422v9M877 429l5-5M983 429l5-5" />
        <path d="M877 532.500h39M941 532.500h46M879.500 528v9M985.500 528v9M877 535l5-5M983 535l5-5" />
        <path d="M893 517.500h29M941 517.500h30M895.500 512v9M969.500 512v9M893 520l5-5M967 520l5-5" />
        <path d="M871.500 434v39M871.500 483v42M868 436.500h9M868 523.500h9M869 434l5 5M869 521l5 5" />
        <path d="M976.500 446v22M976.500 490v22M972 448.500h9M972 510.500h9M974 446l5 5M974 508l5 5" />
        <path d="M993.500 434v32M993.500 495v30M990 436.500h9M990 523.500h9M991 434l5 5M991 521l5 5" />
        {/* column and slab */}
        <path d="M908 550.500h20l3-3v7l4-4h19M918.500 550v82M945.500 550v82" />
        <path d="M826 632.500h208M826 663.500h208M826.500 625v22l-3 2h8l-4 3v22M1033.500 625v22l-3 2h8l-4 3v22" />
        <path d="M878 664l18 35.500h73l16-35.500 12-25M980 661l11 4M992 636l11 5" />
        <path d="M995.500 661v9M995.500 692v10M990 699.500h12M993 661l5 5M993 697l5 5" />
        <path d="M864 688.500h35M864 720.500h44.500V692" />
      </g>
      <path d="M872 636l27 58.500h67l26-58.500" fill="none" stroke="#f00" strokeWidth="1.500" />
      {DOTS.map(([x, y]) => <path key={`${x}-${y}`} d={`M${x - 1.5} ${y}.5h3M${x} ${y - 1}v3`} stroke="#ff0" />)}
      <path d="M844 484h18M1008 484h17M919 740h36" stroke="#0ff" strokeWidth="2" />
      <g fill="#0ff" textAnchor="middle" fontFamily="Liberation Mono">
        <text x="853" y="480">1</text>
        <text x="1016" y="480">1</text>
        <text x="937" y="735">1-1</text>
      </g>
      <g fill="#0f0" textAnchor="middle" fontFamily="Liberation Mono" fontSize="11">
        <text x="931" y="521">800</text>
        <text x="928" y="537">2000</text>
        <text transform="translate(983 479) rotate(-90)">800</text>
        <text transform="translate(1000 481) rotate(-90)">2000</text>
        <text transform="translate(1000 681) rotate(-90)">600</text>
        <text x="837" y="707" fontSize="12">C10@150</text>
        <text x="836" y="741" fontSize="12">C10@150</text>
      </g>
      <text x="1004" y="658" textAnchor="middle" fill="#0f0">laE</text>
      <g fill="#fff">
        <text x="924" y="430">X</text>
        <text x="867" y="481">Y</text>
        <text x="814" y="692">X向纵筋</text>
        <text x="814" y="723">Y向纵筋</text>
      </g>
    </svg>
  );
}

function PropertyWindow() {
  return (
    <section className="absolute left-[744px] top-[90px] w-[366px] h-[671px] border-x-4 border-[#7a8fe0] bg-[#ece9d8] flex flex-col overflow-hidden">
      <header className="flex items-center justify-between h-[22px] -mx-1 pl-1 pr-[5px] shrink-0 bg-linear-to-b from-[#6a86dc] via-[#7d9be6] to-[#7690e2]">
        <h2 className="text-[13px] font-bold text-[#dbe5fb]">属性编辑器</h2>
        <button aria-label="关闭" className="w-[13px] h-[13px] border border-white rounded-xs bg-[#b5657b] flex items-center justify-center">
          <svg viewBox="0 0 8 8" className="w-2 h-2"><path d="M1 1l6 6M7 1L1 7" stroke="#fff" strokeWidth="2" /></svg>
        </button>
      </header>
      <div className="flex h-[287px] shrink-0 border-b border-[#8da3c4]">
        <div className="overflow-hidden">
          <PropertyTable />
        </div>
        <div className="grow flex flex-col items-center bg-[#f4f3ee] pt-[2px] pb-[2px]">
          <ScrollArrow up />
          <div className="w-[15px] h-[116px] mt-px rounded-sm border border-[#aac0f2] bg-[#c6d6fd] flex flex-col items-center justify-center gap-px">
            <span className="w-[7px] h-px bg-[#8ca4dd]" />
            <span className="w-[7px] h-px bg-[#eef4fe]" />
            <span className="w-[7px] h-px bg-[#8ca4dd]" />
            <span className="w-[7px] h-px bg-[#eef4fe]" />
            <span className="w-[7px] h-px bg-[#8ca4dd]" />
          </div>
          <span className="grow" />
          <ScrollArrow />
        </div>
      </div>
      <div className="h-1 shrink-0 border-b border-white" />
      <PierDrawing />
    </section>
  );
}

// rects / radii: plan view, col: [x1, x2, top, bottom], slab: [x1, x2, top, bottom],
// base: [top x1, top x2, bottom x1, bottom x2, top, bottom]
const PIERS = [
  { name: '矩形上柱墩', rects: [[46, 4, 42, 35], [61, 16, 11, 11]], col: [62, 73, 44, 76], base: [46, 88, 46, 88, 76, 100], slab: [25, 108, 100, 113], label: [68, 133] },
  { name: '圆形上柱墩', center: [69, 25], radii: [21.5, 5.5], col: [64, 75, 50, 82], base: [48, 91, 48, 91, 82, 106], slab: [28, 110, 106, 119], label: [68, 135] },
  { name: '棱台形上柱墩', rects: [[47, 4, 43, 35], [56, 11, 25, 22], [63, 16, 11, 11]], bevel: true, col: [63, 74, 46, 78], base: [55, 81, 47, 89, 78, 101], slab: [26, 109, 101, 114], label: [72, 135] },
  { name: '圆台形上柱墩', center: [70, 24], radii: [21.5, 12.5, 5.5], col: [65, 76, 50, 82], base: [58, 83, 49, 92, 82, 105], slab: [28, 111, 105, 118], label: [70, 136] },
  { name: '下方上圆形上柱墩', rects: [[47, 3, 43, 43]], center: [69, 25], radii: [12.5, 5.5], col: [64, 75, 50, 82], base: [57, 82, 48, 91, 82, 105], slab: [27, 110, 105, 118], label: [69, 136] },
  { name: '矩形下柱墩', rects: [[47, 5, 43, 35], [63, 17, 12, 11]], col: [63, 75, 48, 80], base: [47, 90, 47, 90, 94, 109], slab: [26, 109, 80, 94], label: [68, 132] },
  { name: '圆形下柱墩', center: [70, 24], radii: [21.5, 6.5], col: [64, 77, 56, 88], base: [49, 91, 49, 91, 100, 116], slab: [28, 111, 88, 100], label: [70, 134] },
  { name: '棱台形下柱墩', rects: [[46, 6, 43, 34], [53, 11, 30, 25], [62, 18, 11, 10]], bevel: true, col: [62, 73, 51, 84], base: [46, 89, 53, 83, 97, 111], slab: [26, 108, 84, 97], label: [66, 134], selected: true },
  { name: '圆台形下柱墩', center: [70, 26], radii: [21.5, 12.5, 5.5], col: [66, 77, 54, 87], base: [51, 92, 58, 85, 99, 114], slab: [29, 111, 87, 99], label: [72, 135] },
];

function PierFigure({ pier }) {
  const { rects = [], center, radii = [], bevel, col, base, slab, label } = pier;
  const mid = Math.round((slab[2] + slab[3]) / 2);
  const cx = Math.round((col[0] + col[1]) / 2);
  const [outer, inner] = rects;
  return (
    <svg viewBox="0 0 140 140" className="block w-[140px] h-[140px] bg-[#008080]" aria-hidden="true">
      <g fill="none" stroke="#fff" transform="translate(.5 .5)" shapeRendering="crispEdges">
        {rects.map(([x, y, w, h]) => <rect key={x} x={x} y={y} width={w} height={h} />)}
        {radii.map(r => <circle key={r} cx={center[0]} cy={center[1]} r={r} />)}
        {bevel && (
          <path
            d={`M${outer[0]} ${outer[1]}L${inner[0]} ${inner[1]}M${outer[0] + outer[2]} ${outer[1]}L${inner[0] + inner[2]} ${inner[1]}M${outer[0]} ${outer[1] + outer[3]}L${inner[0]} ${inner[1] + inner[3]}M${outer[0] + outer[2]} ${outer[1] + outer[3]}L${inner[0] + inner[2]} ${inner[1] + inner[3]}`}
          />
        )}
        <path d={`M${col[0] - 4} ${col[2]}H${col[1] + 4}M${cx - 1} ${col[2] - 2}v4M${col[0]} ${col[2]}V${col[3]}M${col[1]} ${col[2]}V${col[3]}`} />
        <path d={`M${base[0]} ${base[4]}H${base[1]}L${base[3]} ${base[5]}H${base[2]}Z`} />
        <path d={`M${slab[0]} ${slab[2]}H${slab[1]}M${slab[0]} ${slab[3]}H${slab[1]}`} />
        <path d={`M${slab[0]} ${slab[2] - 3}V${slab[3] + 4}M${slab[1]} ${slab[2] - 3}V${slab[3] + 4}M${slab[0] - 2} ${mid}h4M${slab[1] - 2} ${mid}h4`} />
      </g>
      <text x={label[0]} y={label[1]} textAnchor="middle" fontSize="14" fill="#fff">{pier.name}</text>
    </svg>
  );
}

function ShapeDialog() {
  return (
    <div role="dialog" aria-label="选择参数化图形" className="absolute left-[246px] top-[134px] w-[512px] rounded-t-lg bg-[#0a3fe0] px-[3px] pb-[3px] border-r border-b border-[#001a9c]">
      <header className="-mx-[3px] h-[29px] rounded-t-lg pl-[7px] pr-1 flex items-center justify-between bg-linear-to-b from-[#3d95ff] via-[#0055e5] to-[#0062fb]">
        <h1 className="text-sm font-bold text-white [text-shadow:1px_1px_#0a246a]">选择参数化图形</h1>
        <button aria-label="关闭" className="w-[21px] h-[21px] rounded-sm border border-white bg-linear-to-br from-[#f0896a] to-[#cf3a10] flex items-center justify-center">
          <svg viewBox="0 0 12 12" className="w-3 h-3"><path d="M1 1l10 10M11 1L1 11" stroke="#fff" strokeWidth="2" /></svg>
        </button>
      </header>
      <div className="bg-[#ece9d8] pt-[7px] pl-[9px] pr-[13px] pb-2">
        <fieldset className="border border-[#cfcfbb] rounded mr-[3px] px-1 pb-1">
          <legend className="ml-1 px-[2px] text-[#0046d5] leading-4">图形</legend>
          <div className="grid grid-cols-3 gap-[3px] pt-[3px]">
            {PIERS.map(pier => (
              <button
                key={pier.name}
                aria-label={pier.name}
                className={clsx(
                  'w-[155px] h-[159px] pl-[6px] pt-2 pb-[10px] border border-t-white border-l-white border-r-[#aca899] border-b-[#aca899]',
                  pier.selected && 'bg-[#00ffff]'
                )}
              >
                <PierFigure pier={pier} />
              </button>
            ))}
          </div>
        </fieldset>
        <div className="flex justify-end gap-[15px] mt-[10px]">
          <button className="w-[72px] h-6 rounded-[3px] border border-[#003c74] bg-linear-to-b from-white to-[#ecebe5] shadow-[inset_0_0_0_2px_#a8c0ee] p-[2px]">
            <span className="flex items-center justify-center h-full border border-dotted border-[#555]">确定</span>
          </button>
          <button className="w-[72px] h-6 rounded-[3px] border border-[#003c74] bg-linear-to-b from-white to-[#ecebe5]">取消</button>
        </div>
      </div>
    </div>
  );
}

const ARROWS = [
  [84, 497, 223, 130],
  [224, 131, 462, 590],
  [462, 590, 887, 160],
  [887, 161, 976, 617],
];

// Tapered pointer: hairline at the tail, widening up to the head
function arrowPoints([x1, y1, x2, y2]) {
  const len = Math.hypot(x2 - x1, y2 - y1);
  const ux = (x2 - x1) / len;
  const uy = (y2 - y1) / len;
  const at = (d, side) => `${x1 + ux * d - uy * side},${y1 + uy * d + ux * side}`;
  return [at(0, 0.6), at(len - 10, 2.2), at(len - 11, 5), at(len, 0), at(len - 11, -5), at(len - 10, -2.2), at(0, -0.6)].join(' ');
}

export default function App() {
  return (
    <div className="relative h-screen overflow-hidden flex flex-col bg-[#ece9d8] text-black text-xs font-['Liberation_Serif','Noto_Sans_CJK_SC',sans-serif]">
      <TopBar />
      <div className="flex grow min-h-0">
        <NavPanel />
        <ComponentList />
        <main className="grow min-w-0 flex flex-col overflow-hidden">
          <MainToolbars />
          <ModelCanvas />
        </main>
      </div>
      <PropertyWindow />
      <ShapeDialog />
      <svg viewBox="0 0 1144 761" className="absolute left-0 top-0 w-[1144px] h-[761px] pointer-events-none" aria-hidden="true">
        {ARROWS.map(a => <polygon key={a.join()} points={arrowPoints(a)} fill="#fb3a3a" />)}
      </svg>
    </div>
  );
}
